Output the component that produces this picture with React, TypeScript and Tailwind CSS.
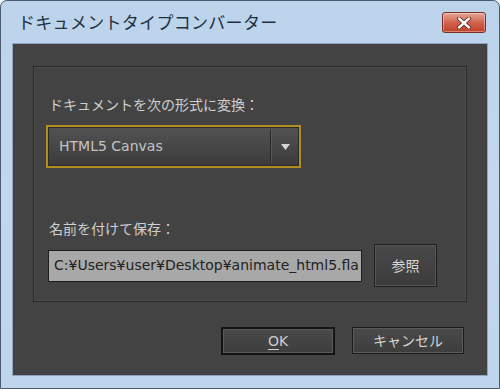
import React from 'react';

const jp = { fontFamily: '"Noto Sans CJK JP", "Noto Sans", sans-serif' };
const latin = { fontFamily: '"DejaVu Sans", "Noto Sans CJK JP", sans-serif' };

const App: React.FC = () => {
  return (
    <div className="w-[500px] h-[389px] bg-[#eef3f8] overflow-hidden">
      {/* Window frame */}
      <div className="w-[500px] h-[389px] rounded-t-[7px] border border-[#4b5b6e] bg-gradient-to-b from-[#bcd3ec] via-[#c3d8ef] to-[#bfd5ed] flex flex-col px-[11px] pb-[12px]">
        {/* Title bar */}
        <div className="h-[42px] flex items-center justify-between pl-[6px] pr-[2px] shrink-0">
          <span className="text-[17px] text-[#23303f] tracking-[0.3px]" style={jp}>
            ドキュメントタイプコンバーター
          </span>
          <button className="w-[44px] h-[21px] mt-[1px] rounded-[3px] border border-[#7a3125] bg-gradient-to-b from-[#e5a597] via-[#d0634d] to-[#c2402a] flex items-center justify-center shadow-[inset_0_0_0_1px_rgba(255,255,255,0.35)]">
            <svg width="14" height="12" viewBox="0 0 14 12">
              <path d="M2 1.5 L12 10.5 M12 1.5 L2 10.5" stroke="#5a1d14" strokeWidth="4" strokeLinecap="round" />
              <path d="M2 1.5 L12 10.5 M12 1.5 L2 10.5" stroke="#ffffff" strokeWidth="2.4" strokeLinecap="round" />
            </svg>
          </button>
        </div>

        {/* Content */}
        <div className="flex-1 bg-[#434343] border border-[#8ea6c2] flex flex-col px-[20px] pt-[22px] pb-[20px]">
          {/* Group panel */}
          <div className="border border-[#2a2a2a] shadow-[inset_0_0_0_1px_#4c4c4c] pt-[27px] pb-[14px] pl-[12px] pr-[14px] flex flex-col">
            <div className="pl-[3px] h-[20px] flex items-center text-[14px] text-[#cfcfcf]" style={jp}>
              ドキュメントを次の形式に変換：
            </div>
            {/* Dropdown */}
            <div className="mt-[11px] w-[255px] h-[43px] border-[2px] border-[#b18d22] bg-[#2a2a2a] p-[1px]">
              <div className="h-full flex bg-gradient-to-b from-[#525252] to-[#3c3c3c]">
                <div className="flex-1 flex items-center pl-[10px] text-[14px] text-[#c4c4c4]" style={latin}>
                  HTML5 Canvas
                </div>
                <div className="w-[1px] bg-[#262626] my-[2px]" />
                <div className="w-[1px] bg-[#5a5a5a] my-[2px]" />
                <div className="w-[26px] flex items-center justify-center">
                  <svg width="9" height="6" viewBox="0 0 9 6">
                    <path d="M0 0 H9 L4.5 6 Z" fill="#d4d4d4" />
                  </svg>
                </div>
              </div>
            </div>

            <div className="mt-[50px] pl-[3px] h-[20px] flex items-center text-[14px] text-[#cfcfcf]" style={jp}>
              名前を付けて保存：
            </div>
            <div className="mt-[6px] h-[43px] flex items-center">
              <div className="ml-[2px] w-[314px] h-[32px] bg-[#a8a8a8] border border-[#1e1e1e] flex items-center pl-[5px] text-[14px] text-[#222222] overflow-hidden whitespace-nowrap" style={latin}>
                C:¥Users¥user¥Desktop¥animate_html5.fla
              </div>
              <button className="ml-[12px] w-[63px] h-[43px] border border-[#1f1f1f] bg-gradient-to-b from-[#494949] to-[#3c3c3c] shadow-[inset_0_0_0_1px_#555] text-[14px] text-[#d8d8d8]" style={jp}>
                参照
              </button>
            </div>
          </div>

          {/* Buttons */}
          <div className="mt-[25px] flex justify-end gap-[17px] pr-[3px]">
            <button className="w-[114px] h-[28px] border-[2px] border-[#141414] bg-gradient-to-b from-[#4a4a4a] to-[#3d3d3d] shadow-[inset_0_0_0_1px_#5a5a5a] text-[14px] text-[#cccccc] flex items-center justify-center" style={latin}>
              <span className="underline underline-offset-[3px]">O</span>K
            </button>
            <button className="w-[112px] h-[27px] border border-[#1c1c1c] bg-gradient-to-b from-[#4a4a4a] to-[#3d3d3d] shadow-[inset_0_0_0_1px_#5a5a5a] text-[14px] text-[#d4d4d4] flex items-center justify-center" style={jp}>
              キャンセル
            </button>
          </div>
        </div>
      </div>
    </div>
  );
};

export default App;
